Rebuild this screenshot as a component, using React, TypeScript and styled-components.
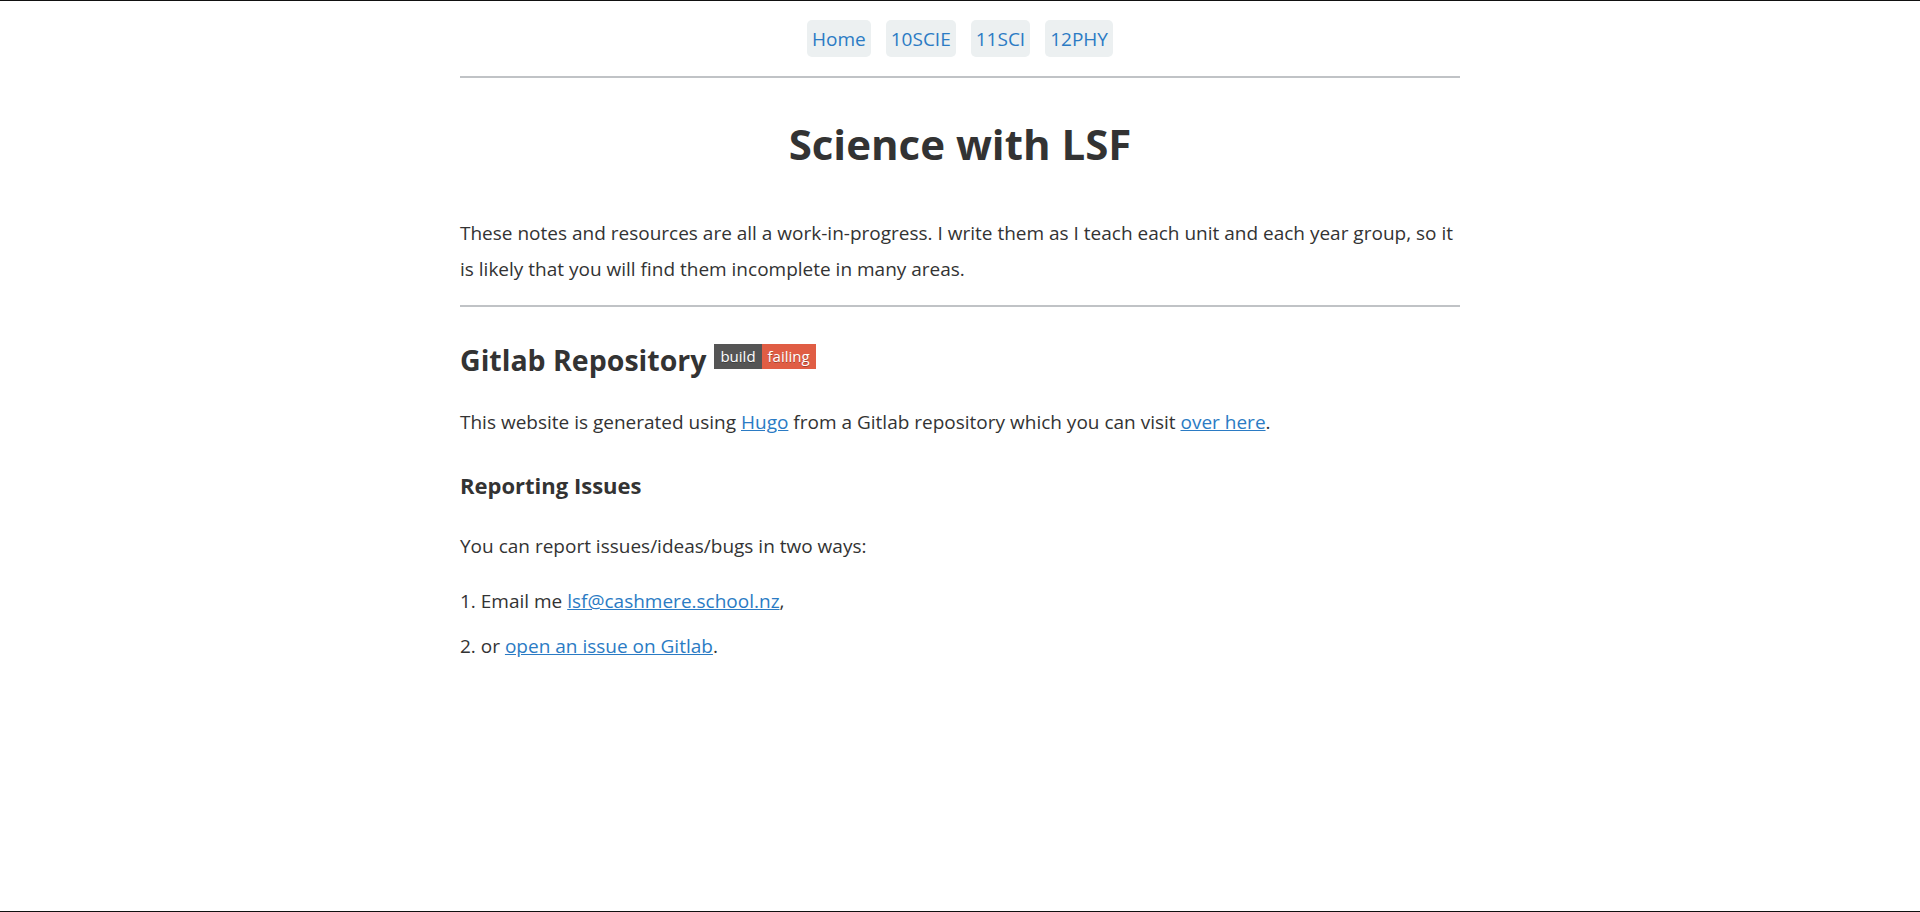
import React from "react";
import styled, { createGlobalStyle } from "styled-components";

const GlobalStyle = createGlobalStyle`
  html, body {
    margin: 0;
    padding: 0;
    background: #fff;
  }
  body {
    font-family: "Open Sans", "Noto Sans", sans-serif;
    color: #333;
  }
`;

const Page = styled.div`
  min-height: 912px;
  box-sizing: border-box;
  border-top: 1px solid #111;
  border-bottom: 1px solid #111;
  display: flex;
  flex-direction: column;
  align-items: center;
`;

const Nav = styled.nav`
  display: flex;
  gap: 15px;
  padding-top: 19px;
`;

const NavButton = styled.a`
  display: flex;
  align-items: center;
  height: 37px;
  padding: 0 5px;
  background-color: #ecf0f1;
  border-radius: 5px;
  color: #2b7bc4;
  font-size: 19px;
  text-decoration: none;
`;

const Main = styled.main`
  width: 1000px;
`;

const Rule = styled.hr<{ gap: number }>`
  border: none;
  height: 2px;
  background-color: #c0c3c6;
  margin: ${(p) => p.gap}px 0 0;
`;

const Title = styled.h1`
  margin: 40px 0 0;
  text-align: center;
  font-size: 42px;
  line-height: 52px;
  font-weight: 700;
  color: #333;
`;

const Para = styled.p<{ top: number }>`
  margin: ${(p) => p.top}px 0 0;
  font-size: 19px;
  line-height: 36px;
`;

const SectionTitle = styled.h2`
  margin: 33px 0 0;
  font-size: 28.5px;
  line-height: 40px;
  font-weight: 700;
  display: flex;
  align-items: center;
  gap: 8px;
`;

const Badge = styled.span`
  display: inline-flex;
  height: 25px;
  margin-bottom: 7px;
  font-size: 15px;
  font-weight: 400;
  line-height: 25px;
  color: #fff;
  text-shadow: 0 1px 0 rgba(1, 1, 1, 0.3);
`;

const BadgePart = styled.span<{ tone: string }>`
  background-color: ${(p) => p.tone};
  padding: 0 6px;
`;

const SubTitle = styled.h3`
  margin: 30px 0 0;
  font-size: 22px;
  line-height: 30px;
  font-weight: 700;
`;

const Steps = styled.ol`
  list-style: none;
  padding: 0;
  margin: 19px 0 0;
  display: flex;
  flex-direction: column;
  gap: 9px;
`;

const Step = styled.li`
  font-size: 19px;
  line-height: 36px;
`;

const Link = styled.a`
  color: #2b7bc4;
  text-decoration: underline;
`;

const navItems = ["Home", "10SCIE", "11SCI", "12PHY"];

export default function App() {
  return (
    <>
      <GlobalStyle />
      <Page>
        <Nav>
          {navItems.map((item) => (
            <NavButton key={item} href="#">
              {item}
            </NavButton>
          ))}
        </Nav>
        <Main>
          <Rule gap={19} />
          <Title>Science with LSF</Title>
          <Para top={45}>
            These notes and resources are all a work-in-progress. I write them as I teach each unit and each
            year group, so it is likely that you will find them incomplete in many areas.
          </Para>
          <Rule gap={18} />
          <SectionTitle>
            Gitlab Repository
            <Badge>
              <BadgePart tone="#555">build</BadgePart>
              <BadgePart tone="#e05d44">failing</BadgePart>
            </Badge>
          </SectionTitle>
          <Para top={24}>
            This website is generated using <Link href="#">Hugo</Link> from a Gitlab repository which you can
            visit <Link href="#">over here</Link>.
          </Para>
          <SubTitle>Reporting Issues</SubTitle>
          <Para top={28}>You can report issues/ideas/bugs in two ways:</Para>
          <Steps>
            <Step>
              1. Email me <Link href="#">lsf@cashmere.school.nz</Link>,
            </Step>
            <Step>
              2. or <Link href="#">open an issue on Gitlab</Link>.
            </Step>
          </Steps>
        </Main>
      </Page>
    </>
  );
}
